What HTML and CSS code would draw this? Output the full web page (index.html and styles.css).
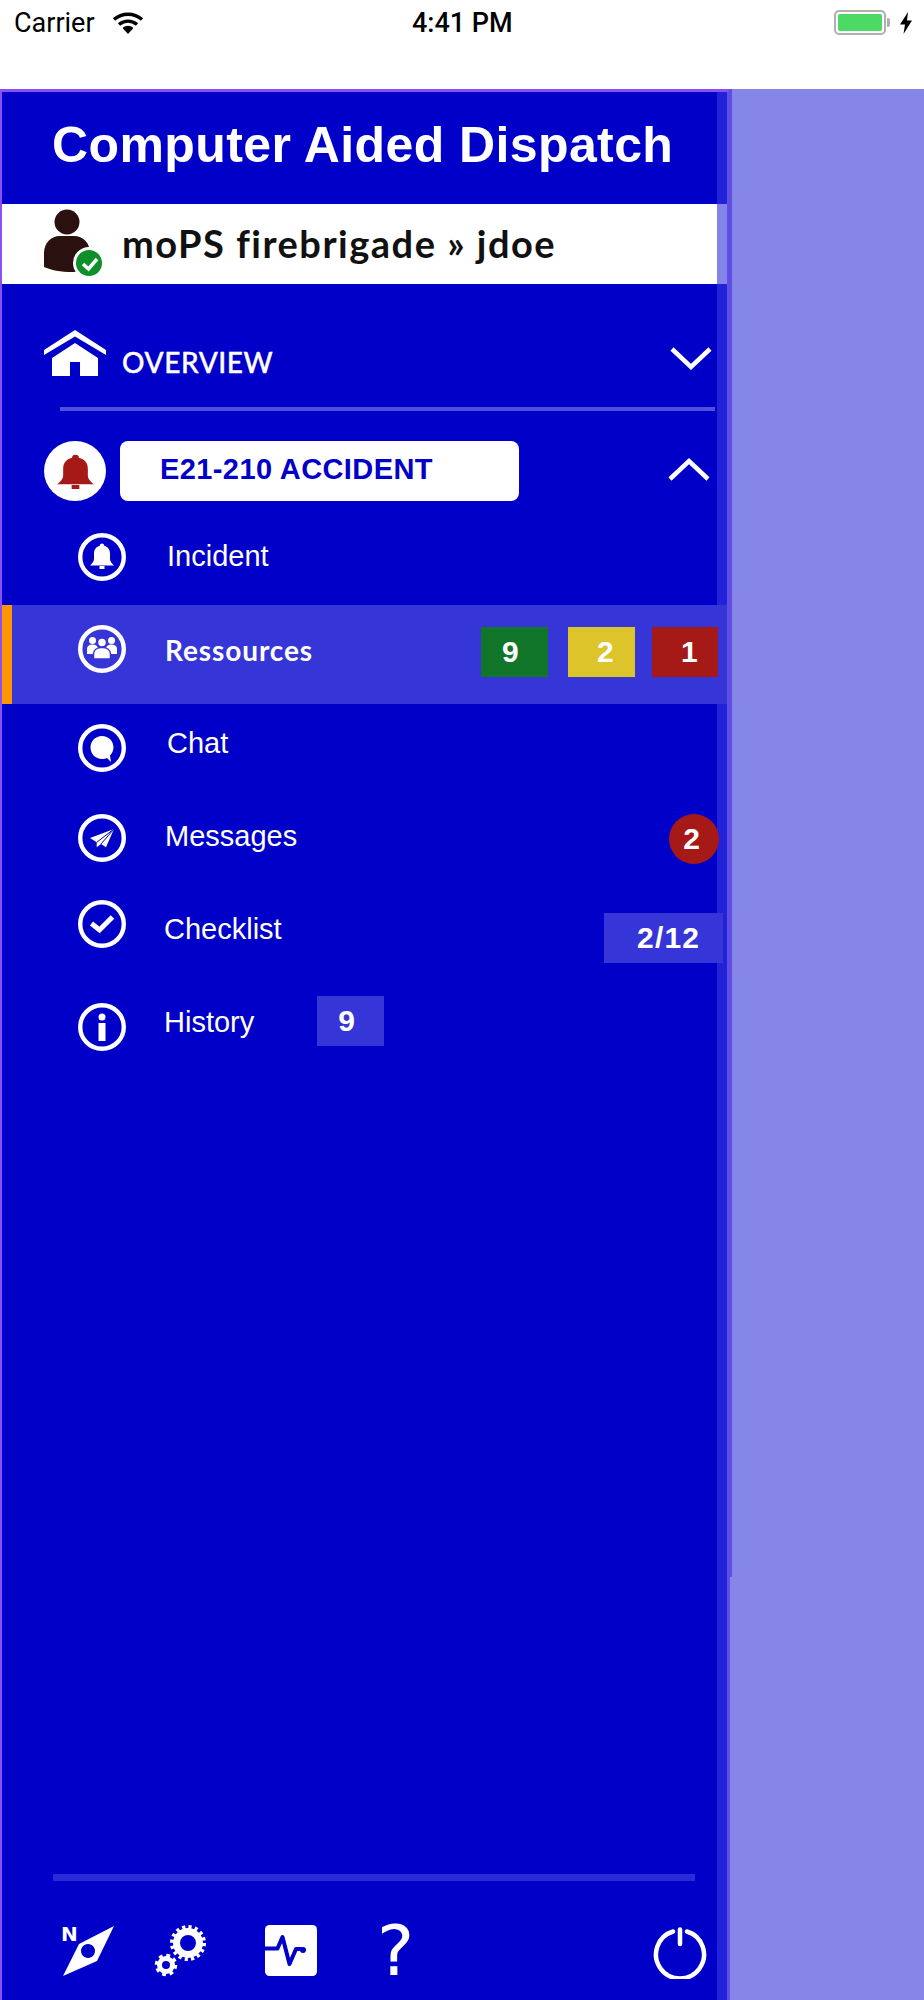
FILE: index.html
```html
<!DOCTYPE html>
<html lang="en">
<head>
    <meta charset="UTF-8">
    <meta name="viewport" content="width=device-width, initial-scale=1.0">
    <title>Computer Aided Dispatch</title>
    <link rel="stylesheet" href="styles.css">
</head>
<body>
    <svg class="defs" width="0" height="0">
        <symbol id="bell" viewBox="12 9 24 26" preserveAspectRatio="none">
            <path d="M24 9.500c-1.500 0-2.200 1-2.200 2.200-4 1-5.800 4.200-5.800 8v5c0 3-2 4.800-4 6.800h24c-2-2-4-3.800-4-6.800v-5c0-3.800-1.800-7-5.800-8 0-1.200-.7-2.200-2.200-2.200zM21.500 32h5v3h-5z"/>
        </symbol>
    </svg>

    <!-- status bar -->
    <div class="status">
        <span class="carrier">Carrier</span>
        <svg class="wifi" width="32" height="22" viewBox="0 0 32 22" fill="none" stroke="#000">
            <path d="M2 7.500c8-7 20-7 28 0" stroke-width="3.500"/>
            <path d="M7 12.500c5.500-4.500 12.500-4.500 18 0" stroke-width="3.500"/>
            <path d="M11.500 17c3-2.200 6-2.200 9 0" stroke-width="3"/>
            <path d="M16 22l-4-4.500c2.500-1.500 5.500-1.500 8 0z" fill="#000" stroke="none"/>
        </svg>
        <span class="time">4:41 PM</span>
        <div class="battery"><div class="battery-fill"></div></div>
        <div class="battery-tip"></div>
        <svg class="bolt" width="14" height="22" viewBox="0 0 14 22"><path d="M9 0L1 12.500h5L4.500 22 13 8.500H8z"/></svg>
    </div>

    <div class="screen">
        <div class="drawer">
            <div class="title">Computer Aided Dispatch</div>

            <div class="user">
                <svg class="avatar" width="66" height="76" viewBox="0 0 66 76">
                    <circle cx="27" cy="16" r="12.500" fill="#2b1010"/>
                    <path d="M4 61V47c0-10 7-17 16-17h14c9 0 16 7 16 17v18l-17 1c-13 0-22-2-29-5z" fill="#2b1010"/>
                    <circle cx="49" cy="57" r="16" fill="#fff"/>
                    <circle cx="49" cy="57" r="13" fill="#0f8f2a"/>
                    <path d="M43 58l5.500 5 8.500-10" fill="none" stroke="#fff" stroke-width="3.500"/>
                </svg>
                <span class="user-name">moPS firebrigade » jdoe</span>
            </div>

            <div class="overview">
                <svg class="house" width="62" height="46" viewBox="0 0 62 46" fill="#fff">
                    <path d="M31 0L62 20v5L31 6.500 0 25v-5z"/>
                    <path d="M31 13L8 28v18h18V32h10v14h18V28z"/>
                </svg>
                <span class="overview-label">OVERVIEW</span>
                <svg class="chevron chevron-down" width="42" height="24" viewBox="0 0 42 24"><path d="M2 2l19 18L40 2"/></svg>
            </div>
            <div class="rule"></div>

            <div class="incident-head">
                <div class="alarm"><svg width="37" height="35" fill="#a51a16"><use href="#bell"/></svg></div>
                <div class="incident-name">E21-210 ACCIDENT</div>
                <svg class="chevron chevron-up" width="42" height="24" viewBox="0 0 42 24"><path d="M2 22L21 4l19 18"/></svg>
            </div>

            <div class="item item-incident">
                <svg class="ring" viewBox="0 0 48 48">
                    <circle class="ring-line" cx="24" cy="24" r="21.800"/>
                    <use href="#bell" x="12" y="10" width="24" height="26" fill="#fff"/>
                </svg>
                <span class="label">Incident</span>
            </div>

            <div class="item item-res">
                <svg class="ring" viewBox="0 0 48 48">
                    <circle class="ring-line" cx="24" cy="24" r="21.800"/>
                    <g fill="#fff">
                        <circle cx="14.500" cy="15.500" r="3.500"/>
                        <circle cx="33.500" cy="15.500" r="3.500"/>
                        <path d="M9 29v-5c0-3 2-4.500 5.500-4.500S20 21 20 24v5zM28 29v-5c0-3 2-4.500 5.500-4.500S39 21 39 24v5z"/>
                        <circle cx="24" cy="17.500" r="4.500" stroke="#3535d8" stroke-width="1.500"/>
                        <path d="M15.500 34v-5c0-4 3.500-6.500 8.500-6.500s8.500 2.500 8.500 6.500v5z" stroke="#3535d8" stroke-width="1.500"/>
                    </g>
                </svg>
                <span class="label label-strong">Ressources</span>
                <div class="res-badges">
                    <div class="badge badge-green">9</div>
                    <div class="badge badge-yellow">2</div>
                    <div class="badge badge-red">1</div>
                </div>
            </div>

            <div class="item item-chat">
                <svg class="ring" viewBox="0 0 48 48">
                    <circle class="ring-line" cx="24" cy="24" r="21.800"/>
                    <path d="M24 12c-6.500 0-11.500 5-11.500 11.500S17.500 35 24 35c2 0 3.500-.4 5-1l4 4-1-6.500c2-2 3.500-5 3.500-8C35.500 17 30.500 12 24 12z" fill="#fff"/>
                </svg>
                <span class="label">Chat</span>
            </div>

            <div class="item item-msg">
                <svg class="ring" viewBox="0 0 48 48">
                    <circle class="ring-line" cx="24" cy="24" r="21.800"/>
                    <path d="M36 15L12 24l6.700 4.300v5l4.300-3.300 5 3.300z" fill="#fff"/>
                    <path d="M18.700 28.300L36 15 23 30" fill="none" stroke="#0000c8" stroke-width="1"/>
                </svg>
                <span class="label">Messages</span>
                <div class="count-round">2</div>
            </div>

            <div class="item item-check">
                <svg class="ring" viewBox="0 0 48 48">
                    <circle class="ring-line" cx="24" cy="24" r="21.800"/>
                    <path d="M13.500 23.500l8 6.500L34.500 17" fill="none" stroke="#fff" stroke-width="5"/>
                </svg>
                <span class="label">Checklist</span>
                <div class="badge badge-soft badge-checks">2/12</div>
            </div>

            <div class="item item-history">
                <svg class="ring" viewBox="0 0 48 48">
                    <circle class="ring-line" cx="24" cy="24" r="21.800"/>
                    <circle cx="24" cy="14" r="3.500" fill="#fff"/>
                    <rect x="20.500" y="20" width="7" height="18" fill="#fff"/>
                </svg>
                <span class="label">History</span>
                <div class="badge badge-soft badge-history">9</div>
            </div>

            <div class="footer">
                <div class="footer-rule"></div>
                <div class="tools">
                    <svg class="tool-compass" width="56" height="56" viewBox="0 -4 56 56">
                        <text x="0" y="16" class="north">N</text>
                        <path fill-rule="evenodd" fill="#fff" d="M53 1L36 36 2 51 18 19zM27 19a7 7 0 1 0 .01 0z"/>
                    </svg>
                    <svg class="tool-gears" width="54" height="52" viewBox="0 0 54 52" fill="none" stroke="#fff">
                        <circle cx="34" cy="18" r="11.500" stroke-width="7"/>
                        <circle cx="34" cy="18" r="16" stroke-width="4" stroke-dasharray="3.140 3.140"/>
                        <circle cx="12" cy="40" r="6.500" stroke-width="5"/>
                        <circle cx="12" cy="40" r="9.500" stroke-width="3.500" stroke-dasharray="3.730 3.730"/>
                    </svg>
                    <svg class="tool-pulse" width="52" height="51" viewBox="0 0 52 51">
                        <rect width="52" height="51" rx="4.500" fill="#fff"/>
                        <path d="M0 23.500h12.500l5-11.500 7 27 6.500-15h5" fill="none" stroke="#0000c8" stroke-width="4" stroke-linejoin="round" stroke-linecap="round"/>
                        <circle cx="38" cy="25" r="3" fill="#0000c8"/>
                    </svg>
                    <span class="tool-help">?</span>
                    <svg class="tool-power" width="54" height="52" viewBox="0 0 54 52" fill="none" stroke="#fff" stroke-width="4.500" stroke-linecap="round">
                        <path d="M20 4.500A24 24 0 1 0 34 4.500"/>
                        <path d="M27 2.500V17"/>
                    </svg>
                </div>
            </div>
        </div>
        <div class="backdrop"></div>
    </div>
</body>
</html>
```

FILE: styles.css
```css
*{
    margin: 0;
    padding: 0;
    box-sizing: border-box;
}

html,body{
    height: 100%;
}

body{
    background: #fff;
    font-family: "Liberation Sans", Arial, sans-serif;
    color: #fff;
    overflow: hidden;
}

.defs{
    position: absolute;
}

svg{
    display: block;
    flex: none;
}

/* status bar */
.status{
    height: 89px;
    padding: 9px 11px 0 14px;
    display: flex;
    align-items: flex-start;
    color: #000;
    font-family: Roboto, "Liberation Sans", sans-serif;
    font-size: 27px;
    line-height: 28px;
}
.carrier{
    width: 85px;
}
.wifi{
    margin: 3px 0 0 13px;
}
.time{
    margin-left: 268px;
    font-weight: 500;
}
.battery{
    margin: 1px 0 0 auto;
    width: 52px;
    height: 25px;
    border: 2px solid #b0b0b0;
    border-radius: 5px;
    padding: 2px 2px;
}
.battery-fill{
    height: 100%;
    background: #4cd964;
    border-radius: 2px;
}
.battery-tip{
    width: 3px;
    height: 9px;
    margin: 9px 0 0 1px;
    background: #b0b0b0;
    border-radius: 0 2px 2px 0;
}
.bolt{
    margin: 3px 0 0 9px;
}

.screen{
    height: 1911px;
    display: flex;
}

/* drawer */
.drawer{
    width: 730px;
    display: flex;
    flex-direction: column;
    border-style: solid;
    border-width: 3px 3px 0 2px;
    border-color: #8a50f5 #5f4fe5 #8a50f5 #8a50f5;
    background: linear-gradient(#2222d8,#2222d8) right top / 10px 100% no-repeat, #0000c8;
}
.backdrop{
    flex: 1;
    background: linear-gradient(#5f4fe5,#5f4fe5) left top / 2px 1488px no-repeat, #8686e8;
}

.title{
    height: 112px;
    padding: 0 0 7px 50px;
    display: flex;
    align-items: center;
    font-size: 50px;
    letter-spacing: .4px;
    font-weight: bold;
}

.user{
    height: 80px;
    background: #fff;
    border-right: 10px solid #8484e8;
    padding: 2px 0 0 38px;
    display: flex;
    align-items: flex-start;
}
.avatar{
    width: 66px;
    height: 76px;
}
.user-name{
    margin: 16px 0 0 16px;
    font-family: Lato, sans-serif;
    font-size: 38px;
    line-height: 42px;
    font-weight: bold;
    letter-spacing: 1.5px;
    color: #111;
}

.overview{
    height: 123px;
    padding: 46px 15px 0 42px;
    display: flex;
    align-items: flex-start;
}
.overview-label{
    margin: 17px 0 0 16px;
    font-family: Lato, sans-serif;
    font-size: 28px;
    line-height: 30px;
    font-weight: 500;
    letter-spacing: .6px;
    -webkit-text-stroke: .4px #fff;
}
.chevron{
    fill: none;
    stroke: #fff;
    stroke-width: 4.5px;
}
.chevron-down{
    margin: 17px 0 0 auto;
}
.rule{
    height: 4px;
    width: 655px;
    margin-left: 58px;
    background: #5050d8;
}

.incident-head{
    height: 97px;
    padding: 30px 17px 0 42px;
    display: flex;
    align-items: flex-start;
}
.alarm{
    width: 62px;
    height: 60px;
    border-radius: 50%;
    background: #fff;
    display: flex;
    align-items: center;
    justify-content: center;
}
.incident-name{
    width: 399px;
    height: 60px;
    margin-left: 14px;
    padding: 0 0 4px 40px;
    background: #fff;
    border-radius: 8px;
    display: flex;
    align-items: center;
    font-size: 29px;
    letter-spacing: .4px;
    font-weight: bold;
    color: #0000c8;
}
.chevron-up{
    margin: 16px 0 0 auto;
}

/* menu rows, the offsets differ a little from row to row */
.item{
    display: flex;
    align-items: flex-start;
    padding-left: 76px;
}
.ring{
    width: 48px;
    height: 48px;
}
.ring-line{
    fill: none;
    stroke: #fff;
    stroke-width: 4.4px;
}
.label{
    font-size: 29px;
    line-height: 32px;
    margin-left: 41px;
}
.label-strong{
    font-family: Lato, sans-serif;
    font-weight: bold;
    font-size: 28px;
    letter-spacing: .9px;
    margin-left: 39px;
}

.item-incident{ height: 97px; }
.item-incident .ring{ margin-top: 25px; }
.item-incident .label{ margin-top: 32px; }

.item-res{
    height: 99px;
    padding-left: 66px;
    border-left: 10px solid #ff9500;
    background: #3535d8;
}
.item-res .ring{ margin-top: 20px; }
.item-res .label{ margin-top: 29px; }

.item-chat{ height: 93px; }
.item-chat .ring{ margin-top: 20px; }
.item-chat .label{ margin-top: 23px; margin-left: 41px; }

.item-msg{ height: 90px; }
.item-msg .ring{ margin-top: 17px; }
.item-msg .label{ margin-top: 23px; margin-left: 39px; }

.item-check{ height: 103px; }
.item-check .ring{ margin-top: 13px; }
.item-check .label{ margin-top: 26px; margin-left: 38px; }

.item-history{ height: 70px; }
.item-history .ring{ margin-top: 13px; }
.item-history .label{ margin-top: 16px; margin-left: 38px; }

/* counters */
.badge{
    width: 67px;
    height: 50px;
    font-size: 30px;
    font-weight: bold;
    line-height: 50px;
}
.res-badges{
    margin: 22px 0 0 auto;
    display: flex;
    padding-right: 9px;
}
.badge-green{
    background: #12762a;
    padding-left: 21px;
    margin-right: 20px;
}
.badge-yellow{
    background: #dcc42a;
    padding-left: 29px;
    margin-right: 17px;
}
.badge-red{
    width: 66px;
    background: #a51a16;
    padding-left: 29px;
}
.badge-soft{
    background: #3535d8;
}
.badge-checks{
    width: 119px;
    margin: 26px 4px 0 auto;
    padding-left: 33px;
    letter-spacing: 1.2px;
}
.badge-history{
    margin: 6px 0 0 63px;
    padding-left: 21px;
}
.count-round{
    width: 50px;
    height: 50px;
    margin: 17px 8px 0 auto;
    padding-right: 5px;
    border-radius: 50%;
    background: #a51a16;
    text-align: center;
    font-size: 30px;
    font-weight: bold;
    line-height: 50px;
}

/* bottom tools */
.footer{
    margin-top: auto;
    height: 126px;
    padding-left: 51px;
}
.footer-rule{
    width: 642px;
    height: 7px;
    background: #2a2ad8;
}
.tools{
    margin: 44px 0 0 8px;
    padding-right: 20px;
    display: flex;
    align-items: flex-start;
}
.tool-compass{
    margin-top: -4px;
}
.north{
    font-family: "DejaVu Sans", sans-serif;
    font-size: 20px;
    font-weight: bold;
    fill: #fff;
}
.tool-gears{
    margin-left: 37px;
}
.tool-pulse{
    margin-left: 57px;
}
.tool-help{
    margin-left: 60px;
    font-family: "DejaVu Sans", sans-serif;
    font-size: 70px;
    line-height: 52px;
}
.tool-power{
    margin-left: auto;
    margin-top: 2px;
}
```
